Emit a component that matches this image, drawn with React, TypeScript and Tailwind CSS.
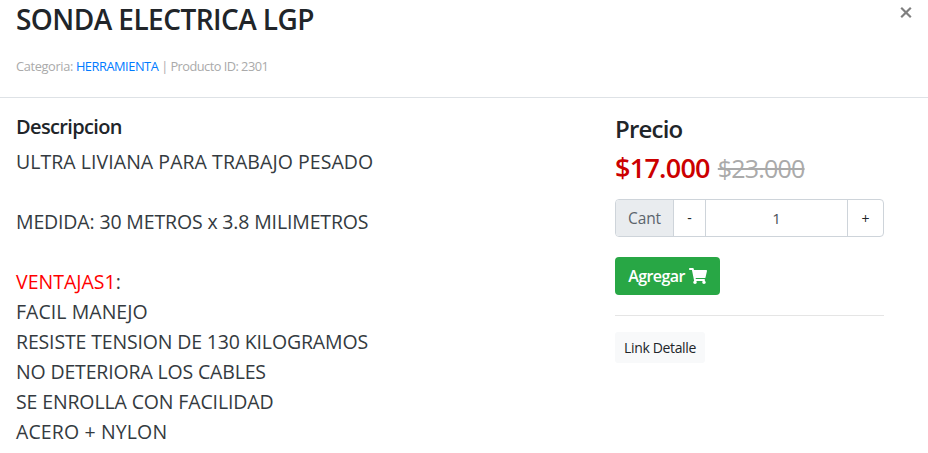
import { useState } from 'react'
import { FaShoppingCart } from 'react-icons/fa'

interface Line {
  text: string
  highlight?: string
  spacing?: string
}

const lines: Line[] = [
  { text: 'ULTRA LIVIANA PARA TRABAJO PESADO', spacing: 'tracking-[0.05px]' },
  { text: '' },
  { text: 'MEDIDA: 30 METROS x 3.8 MILIMETROS', spacing: 'tracking-[-0.15px]' },
  { text: '' },
  { text: ':', highlight: 'VENTAJAS1' },
  { text: 'FACIL MANEJO', spacing: 'tracking-[0.05px]' },
  { text: 'RESISTE TENSION DE 130 KILOGRAMOS', spacing: 'tracking-[-0.15px]' },
  { text: 'NO DETERIORA LOS CABLES', spacing: 'tracking-[-0.16px]' },
  { text: 'SE ENROLLA CON FACILIDAD', spacing: 'tracking-[-0.13px]' },
  { text: 'ACERO + NYLON', spacing: 'tracking-[0.13px]' }
]

const Header = () => (
  <header className="flex h-[98px] items-start justify-between border-b border-[#dee2e6] pl-4 pr-4">
    <div>
      <h4 className="mt-0.5 text-[28px] leading-[34px] font-semibold tracking-[-0.55px]">
        <span>SONDA ELECTRICA LGP</span>
      </h4>
      <p className="mt-5 text-[12.8px] leading-5 tracking-[-0.45px] text-[#aaaaaa]">
        <span className="tracking-[-0.36px]">Categoria: </span>
        <a href="#" className="text-[#007bff]">HERRAMIENTA</a>
        <span className="tracking-[-0.53px]"> | Producto ID: 2301</span>
      </p>
    </div>
    <button type="button" aria-label="Cerrar" className="mt-[7px] text-[#7f7f7f]">
      <svg width="12" height="11" viewBox="0 0 12 11" fill="none" stroke="currentColor" strokeWidth="2.2">
        <path d="M1.2 0.8 L10.8 10.2 M10.8 0.8 L1.2 10.2" />
      </svg>
    </button>
  </header>
)

const Quantity = () => {
  const [count, setCount] = useState(1)

  return (
    <div className="mt-[15px] flex h-[38px] w-[269px] overflow-hidden rounded border border-[#ced4da] text-base">
      <span className="flex w-[58px] items-center justify-center border-r border-[#ced4da] bg-[#e9ecef] pt-0.5 text-[15.5px] tracking-[-0.1px] text-[#5b646c]">
        Cant
      </span>
      <button type="button" className="w-[31px] text-sm" onClick={() => setCount(Math.max(1, count - 1))}>
        -
      </button>
      <span className="flex flex-1 items-center justify-center border-x border-[#ced4da] pt-px text-[15px] text-[#495057]">
        {count}
      </span>
      <button type="button" className="w-[35px] pt-0.5 text-sm" onClick={() => setCount(count + 1)}>
        +
      </button>
    </div>
  )
}

const App = () => {
  return (
    <div className="h-[453px] w-[928px] overflow-hidden bg-white font-['Open_Sans','Noto_Sans',sans-serif] text-[#212529]">
      <Header />
      <main className="flex px-4">
        <section className="w-[599px] pt-[17px]">
          <h5 className="text-[20px] leading-6 font-semibold tracking-[-0.65px]">Descripcion</h5>
          <div className="mt-2 text-[19.5px] leading-[30px] text-[#343a40]">
            {lines.map((line, i) => (
              <div key={i} className="h-[30px] whitespace-nowrap">
                {line.highlight && <span className="text-[#ff0000]">{line.highlight}</span>}
                <span className={line.spacing}>{line.text}</span>
              </div>
            ))}
          </div>
        </section>
        <aside className="w-[269px] pt-4">
          <h4 className="text-[24px] leading-[29px] font-semibold tracking-[-0.8px]">Precio</h4>
          <div className="mt-[9px] flex items-center gap-2 leading-8">
            <span className="text-[27px] font-semibold tracking-[-0.75px] text-[#cc0000]">$17.000</span>
            <span className="text-[25px] tracking-[-0.8px] text-[#aaaaaa] line-through">$23.000</span>
          </div>
          <Quantity />
          <button
            type="button"
            className="mt-5 flex h-[38px] w-[105px] items-center justify-center gap-1 rounded bg-[#28a745] text-white"
          >
            <span className="font-semibold tracking-[-0.6px]">Agregar</span>
            <FaShoppingCart size={18} />
          </button>
          <hr className="mt-5 border-[#e5e5e5]" />
          <button type="button" className="mt-4 h-[31px] w-[90px] rounded-[3px] bg-[#f8f9fa] pt-px text-sm tracking-[-0.35px]">
            Link Detalle
          </button>
        </aside>
      </main>
    </div>
  )
}

export default App
